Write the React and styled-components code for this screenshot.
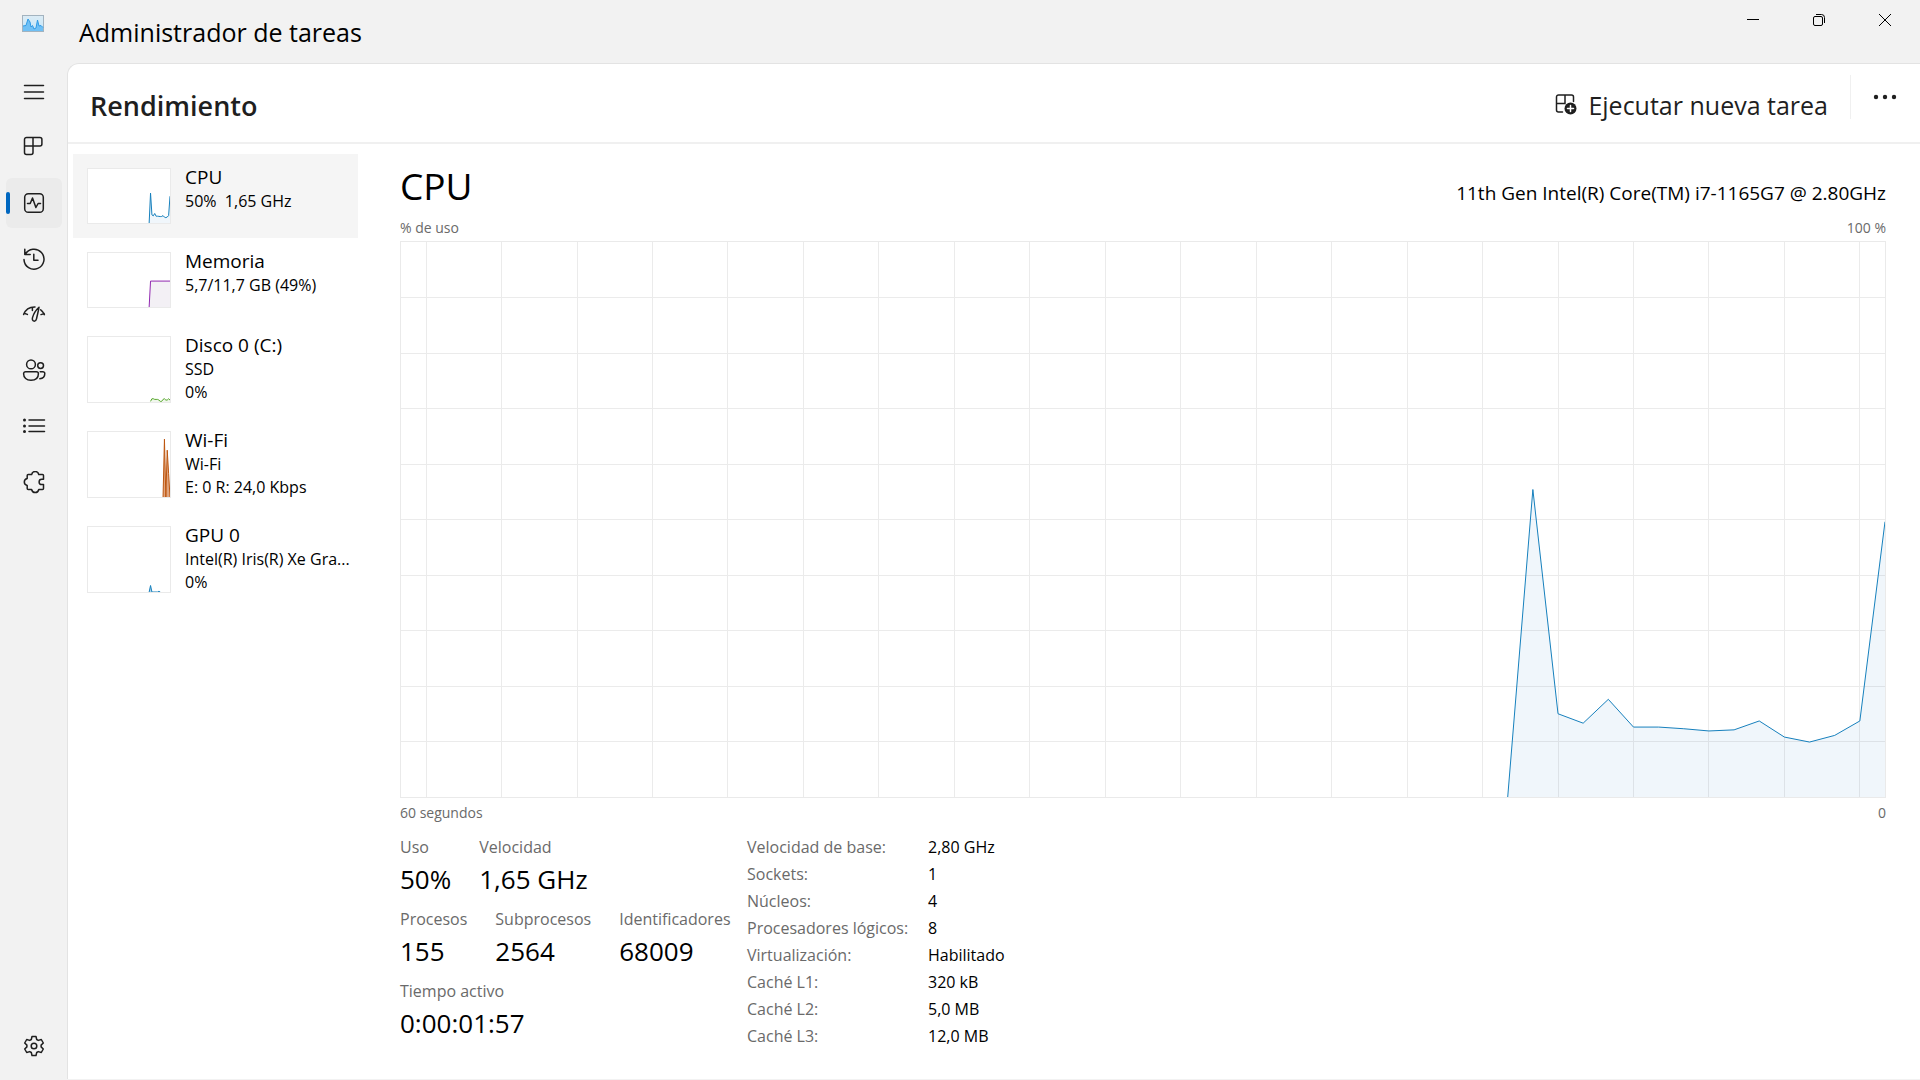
import React from 'react';
import styled, { createGlobalStyle } from 'styled-components';

const colors = {
  chrome: '#f2f2f2',
  panel: '#ffffff',
  edge: '#e3e3e3',
  divider: '#f0f0f0',
  grid: '#eaeaea',
  ink: '#000000',
  icon: '#1f1f1f',
  muted: '#6a6a6a',
  accent: '#0067c0'
};

const GlobalStyle = createGlobalStyle`
  *, *::before, *::after {
    box-sizing: border-box;
  }
  body {
    margin: 0;
    color: ${colors.ink};
    background: ${colors.chrome};
    font-family: 'Open Sans', 'Noto Sans', sans-serif;
  }
  button {
    padding: 0;
    border: 0;
    color: inherit;
    background: none;
    font: inherit;
  }
`;

const StyledWindow = styled.div`
  min-height: 100vh;
  display: flex;
  flex-direction: column;
`;

const StyledTitleBar = styled.header`
  height: 63px;
  display: flex;
  align-items: flex-start;
`;

const StyledLogo = styled.div`
  width: 79px;
  padding: 15px 0 0 22px;
  display: flex;
`;

const StyledTitle = styled.h1`
  flex: 1;
  margin: 0;
  font-size: 25px;
  font-weight: 400;
  line-height: 64px;
`;

const StyledControls = styled.div`
  display: flex;
  padding-right: 2px;
`;

const StyledControl = styled.button`
  width: 66px;
  height: 40px;
  display: flex;
  align-items: center;
  justify-content: center;
`;

const StyledBody = styled.div`
  flex: 1;
  display: flex;
  padding-bottom: 1px;
`;

const StyledSidebar = styled.nav`
  width: 67px;
  padding: 3px 5px 8px 6px;
  display: flex;
  flex-direction: column;
  gap: 6px;
`;

const StyledNavButton = styled.button`
  position: relative;
  width: 56px;
  height: 50px;
  display: flex;
  align-items: center;
  justify-content: center;
  border-radius: 6px;
  color: ${colors.icon};
  background: ${({ $active }) => ($active ? '#ebebeb' : 'transparent')};
  margin-top: ${({ $last }) => ($last ? 'auto' : '0')};

  &::before {
    content: '';
    display: ${({ $active }) => ($active ? 'block' : 'none')};
    position: absolute;
    left: 0;
    top: 14px;
    width: 4px;
    height: 22px;
    border-radius: 2px;
    background: ${colors.accent};
  }
`;

const StyledPanel = styled.main`
  flex: 1;
  min-width: 0;
  display: flex;
  flex-direction: column;
  border: solid ${colors.edge};
  border-width: 1px 0 0 1px;
  border-top-left-radius: 12px;
  background: ${colors.panel};
`;

const StyledPageHeader = styled.div`
  height: 80px;
  padding: 11px 23px 0 22px;
  display: flex;
  align-items: flex-start;
  border-bottom: 2px solid ${colors.divider};
`;

const StyledPageTitle = styled.h2`
  flex: 1;
  margin: 0;
  color: ${colors.icon};
  font-size: 27px;
  font-weight: 600;
  line-height: 62px;
`;

const StyledRunButton = styled.button`
  display: flex;
  align-items: center;
  gap: 10px;
  padding-right: 22px;
  color: ${colors.icon};
  font-size: 25px;
  line-height: 60px;
`;

const StyledMoreButton = styled.button`
  height: 44px;
  padding-left: 22px;
  display: flex;
  align-items: center;
  border-left: 1px solid ${colors.divider};
  color: ${colors.icon};
`;

const StyledContent = styled.div`
  flex: 1;
  display: flex;
  padding: 10px 34px 0 5px;
`;

const StyledResources = styled.div`
  width: 285px;
  flex: none;
`;

const StyledResource = styled.button`
  width: 100%;
  padding: 11px 0 11px 14px;
  display: flex;
  align-items: flex-start;
  gap: 14px;
  text-align: left;
  background: ${({ $active }) => ($active ? '#f5f5f5' : 'transparent')};
`;

const StyledThumb = styled.div`
  flex: none;
  width: 84px;
  height: ${({ $tall }) => ($tall ? '67px' : '56px')};
  margin: 3px 0;
  border: 1px solid ${colors.grid};
  background: ${colors.panel};
`;

const StyledResourceText = styled.div`
  font-size: 16px;
  line-height: 23px;
  white-space: pre;
`;

const StyledResourceName = styled.div`
  font-size: 19px;
  line-height: 25px;
`;

const StyledDetail = styled.section`
  flex: 1;
  min-width: 0;
  padding: 5px 0 29px 42px;
  display: flex;
  flex-direction: column;
`;

const StyledDetailHeader = styled.div`
  display: flex;
  align-items: baseline;
  justify-content: space-between;
`;

const StyledDetailTitle = styled.h3`
  margin: 0;
  font-size: 37px;
  font-weight: 400;
  line-height: 54px;
`;

const StyledDetailModel = styled.div`
  font-size: 19px;
`;

const StyledAxis = styled.div`
  display: flex;
  justify-content: space-between;
  color: ${colors.muted};
  font-size: 14px;
  line-height: 20px;
  padding: 5px 0 3px;
`;

/* size containment keeps the plot from pushing the box taller */
const StyledChartBox = styled.div`
  flex: 1;
  min-height: 240px;
  contain: size;
  border: 1px solid ${colors.grid};
`;

const StyledPlot = styled.svg`
  display: block;
  width: 100%;
  height: 100%;
`;

const StyledStats = styled.div`
  display: flex;
  padding-top: 8px;
`;

const StyledMetrics = styled.div`
  width: 347px;
  padding-top: 1px;
  display: flex;
  flex-direction: column;
  gap: 8px;
`;

const StyledMetricRow = styled.div`
  display: flex;
  gap: 28px;
`;

const StyledMetricLabel = styled.div`
  color: ${colors.muted};
  font-size: 16px;
  line-height: 24px;
`;

const StyledMetricValue = styled.div`
  font-size: 26px;
  line-height: 40px;
`;

const StyledSpecs = styled.table`
  border-collapse: collapse;
  font-size: 16px;
  line-height: 27px;

  th {
    width: 181px;
    padding: 0;
    color: ${colors.muted};
    font-weight: 400;
    text-align: left;
  }
  td {
    padding: 0;
  }
`;

const cpuHistory = [
  [44, 0], [45, 55.4], [46, 15], [47, 13.3], [48, 17.6], [49, 12.6],
  [50, 12.6], [51, 12.3], [52, 11.9], [53, 12.1], [54, 13.7], [55, 10.8],
  [56, 9.9], [57, 11.1], [58, 13.7], [59, 49.6]
];

const resources = [
  {
    name: 'CPU',
    lines: ['50%  1,65 GHz'],
    stroke: '#1680bd',
    fill: '#f0f6fb',
    history: cpuHistory
  },
  {
    name: 'Memoria',
    lines: ['5,7/11,7 GB (49%)'],
    stroke: '#9128b0',
    fill: '#f3f0f5',
    history: [[44, 0], [45, 48], [59, 48]]
  },
  {
    name: 'Disco 0 (C:)',
    lines: ['SSD', '0%'],
    stroke: '#55a62a',
    fill: '#f0f7ec',
    history: [
      [45, 1], [46, 5], [47, 5], [48, 4], [49, 4], [50, 4], [51, 3],
      [52, 1], [53, 1], [54, 4], [55, 5], [56, 3], [57, 3], [58, 5], [59, 3]
    ]
  },
  {
    name: 'Wi-Fi',
    lines: ['Wi-Fi', 'E: 0 R: 24,0 Kbps'],
    stroke: '#bd560f',
    fill: '#e0a37c',
    history: [[54, 0], [55, 89], [56, 0], [57, 72], [58, 36], [59, 0]]
  },
  {
    name: 'GPU 0',
    lines: ['Intel(R) Iris(R) Xe Gra...', '0%'],
    stroke: '#1680bd',
    fill: '#a9d0e8',
    history: [[44, 0], [45, 10], [46, 0], [50, 0], [51, 1], [52, 0]]
  }
];

const metricRows = [
  [['Uso', '50%'], ['Velocidad', '1,65 GHz']],
  [['Procesos', '155'], ['Subprocesos', '2564'], ['Identificadores', '68009']],
  [['Tiempo activo', '0:00:01:57']]
];

const specs = [
  ['Velocidad de base:', '2,80 GHz'],
  ['Sockets:', '1'],
  ['Núcleos:', '4'],
  ['Procesadores lógicos:', '8'],
  ['Virtualización:', 'Habilitado'],
  ['Caché L1:', '320 kB'],
  ['Caché L2:', '5,0 MB'],
  ['Caché L3:', '12,0 MB']
];

const Icon = ({ children }) => (
  <svg
    width="24"
    height="24"
    viewBox="0 0 24 24"
    fill="none"
    stroke="currentColor"
    strokeWidth="1.5"
    strokeLinecap="round"
    strokeLinejoin="round"
    aria-hidden="true"
  >
    {children}
  </svg>
);

const MenuIcon = () => (
  <Icon>
    <path d="M2.5 6.5h19M2.5 13h19M2.5 19.5h19" />
  </Icon>
);

const ProcessesIcon = () => (
  <Icon>
    <path d="M4.5 2.5h13.4a2 2 0 0 1 2 2v4.4a2 2 0 0 1-2 2H11v6.6a2 2 0 0 1-2 2H4.5a2 2 0 0 1-2-2v-13a2 2 0 0 1 2-2zM11 2.5v8.4M2.5 10.9H11" />
  </Icon>
);

const PerformanceIcon = () => (
  <Icon>
    <rect x="2.7" y="2.7" width="18.6" height="18.6" rx="3.6" />
    <path d="M5.5 12.5h2.7L10.5 7l3.4 9.5 2.2-4h2.4" />
  </Icon>
);

const HistoryIcon = () => (
  <Icon>
    <path d="M3.2 7.4A10 10 0 1 1 2 12.6M2.8 2.2v5.4h5.4M11.8 7.2v6h4.2" />
  </Icon>
);

const StartupIcon = () => (
  <Icon>
    <path d="M1.6 11.6C3.4 6.6 7.4 3.9 13 4M2 10.2l3.4 1.2M10.4 4.4v3M18.7 6.8c1.7 1.2 2.9 2.8 3.7 4.8M22.2 10.6l-3.2 1" />
    <path d="M17 4.2c-2.8 2.5-5.3 6-6.5 10.4-.5 2 .2 3.3 1.4 3.5 1.3.2 2.2-.6 2.6-2.3C15.3 11.9 16.5 8 17 4.2z" />
  </Icon>
);

const UsersIcon = () => (
  <Icon>
    <circle cx="9" cy="5.4" r="4.4" />
    <circle cx="18.6" cy="6.6" r="2.9" />
    <path d="M3.6 12.7h10.8a2 2 0 0 1 2 2c0 4.1-2.9 6.5-7.4 6.5s-7.4-2.4-7.4-6.5a2 2 0 0 1 2-2zM18.2 12.7h2.7a1.9 1.9 0 0 1 1.9 1.9c0 3-1.7 5-5 5.2" />
  </Icon>
);

const DetailsIcon = () => (
  <Icon>
    <path d="M7 5h15.5M7 11h15.5M7 16.5h15.5" />
    <g fill="currentColor" stroke="none">
      <circle cx="2.5" cy="5" r="1.5" />
      <circle cx="2.5" cy="11" r="1.5" />
      <circle cx="2.5" cy="16.5" r="1.5" />
    </g>
  </Icon>
);

const ServicesIcon = () => (
  <Icon>
    <path d="M9.6 3.6c.4-2 1.6-3.1 3.6-3.1s3.2 1.1 3.6 3.1h3.7a1 1 0 0 1 1 1v3.6h-1.7a2.7 2.7 0 0 0 0 5.4h1.700v3.9a1 1 0 0 1-1 1h-3.7c-.4 2-1.6 3.1-3.6 3.1s-3.2-1.1-3.6-3.1H6.2a1 1 0 0 1-1-1v-3.1c-1.9-.5-2.9-1.6-2.9-3.4s1-2.9 2.9-3.4V4.600a1 1 0 0 1 1-1z" />
  </Icon>
);

const SettingsIcon = () => (
  <Icon>
    <circle cx="12" cy="12" r="2.8" />
    <path d="M10 2.5h4l.7 3 1.6.9 3-.9 2 3.5-2.2 2.1v1.8l2.2 2.1-2 3.5-3-.9-1.6.9-.7 3h-4l-.7-3-1.600-.9-3 .9-2-3.500 2.200-2.100v-1.800L2.700 9l2-3.500 3 .9 1.600-.9z" />
  </Icon>
);

const RunTaskIcon = () => (
  <Icon>
    <path d="M8.5 19H4.5a2 2 0 0 1-2-2V4a2 2 0 0 1 2-2h13a2 2 0 0 1 2 2v4.5M11 2v8.5M2.5 10.5H11" />
    <circle cx="16.5" cy="15.5" r="6" fill="currentColor" stroke="none" />
    <path d="M16.5 12.5v6M13.5 15.5h6" stroke="#fff" />
  </Icon>
);

const MoreIcon = () => (
  <Icon>
    <g fill="currentColor" stroke="none">
      <circle cx="3" cy="12" r="2.2" />
      <circle cx="12" cy="12" r="2.2" />
      <circle cx="21" cy="12" r="2.2" />
    </g>
  </Icon>
);

const AppLogo = () => (
  <svg width="22" height="17" viewBox="0 0 22 17" aria-hidden="true">
    <defs>
      <linearGradient id="logo-sky" x1="0" y1="0" x2="0" y2="1">
        <stop offset="0" stopColor="#dcecf5" />
        <stop offset="1" stopColor="#c3e6fa" />
      </linearGradient>
    </defs>
    <rect x=".5" y=".5" width="21" height="16" fill="url(#logo-sky)" stroke="#a3b3bf" />
    <path d="M1 16v-5l3-.5L6 4l2 3 1 5 1.5-1.5L12 14l2-1 1.5-8 1.5 6 2-.5 2 2V16z" fill="#6fc0f5" />
    <path d="M1 11l3-.5L6 4l2 3 1 5 1.5-1.5L12 14l2-1 1.5-8 1.5 6 2-.5 2 2" fill="none" stroke="#2f9be6" />
  </svg>
);

const navItems = [
  { label: 'Abrir navegación', icon: MenuIcon },
  { label: 'Procesos', icon: ProcessesIcon },
  { label: 'Rendimiento', icon: PerformanceIcon, active: true },
  { label: 'Historial de aplicaciones', icon: HistoryIcon },
  { label: 'Aplicaciones de arranque', icon: StartupIcon },
  { label: 'Usuarios', icon: UsersIcon },
  { label: 'Detalles', icon: DetailsIcon },
  { label: 'Servicios', icon: ServicesIcon },
  { label: 'Configuración', icon: SettingsIcon, last: true }
];

// x runs over the 60 samples of the last minute, y over 0-100 %
const Plot = ({ history, stroke, fill, grid }) => {
  const points = history.map(([x, value]) => `${x},${100 - value}`);
  const first = history[0][0];
  const last = history[history.length - 1][0];
  const columns = Array.from({ length: 20 }, (_, i) => 1 + i * 3);
  const rows = Array.from({ length: 9 }, (_, i) => 10 + i * 10);
  return (
    <StyledPlot viewBox="0 0 59 100" preserveAspectRatio="none" aria-hidden="true">
      <polygon points={`${first},100 ${points.join(' ')} ${last},100`} fill={fill} />
      {grid && (
        <path
          d={
            columns.map(x => `M${x} 0V100`).join('') +
            rows.map(y => `M0 ${y}H59`).join('')
          }
          stroke="#000"
          strokeOpacity="0.08"
          vectorEffect="non-scaling-stroke"
          shapeRendering="crispEdges"
        />
      )}
      <polyline
        points={points.join(' ')}
        fill="none"
        stroke={stroke}
        vectorEffect="non-scaling-stroke"
      />
    </StyledPlot>
  );
};

const Resource = ({ name, lines, active, ...plot }) => (
  <StyledResource type="button" $active={active}>
    <StyledThumb $tall={lines.length > 1}>
      <Plot {...plot} />
    </StyledThumb>
    <StyledResourceText>
      <StyledResourceName>{name}</StyledResourceName>
      {lines.map(line => (
        <div key={line}>{line}</div>
      ))}
    </StyledResourceText>
  </StyledResource>
);

const App = () => (
  <StyledWindow>
    <GlobalStyle />
    <StyledTitleBar>
      <StyledLogo>
        <AppLogo />
      </StyledLogo>
      <StyledTitle>Administrador de tareas</StyledTitle>
      <StyledControls>
        <StyledControl type="button" aria-label="Minimizar">
          <svg width="12" height="12" viewBox="0 0 12 12" stroke="#000">
            <path d="M0 5.5h12" />
          </svg>
        </StyledControl>
        <StyledControl type="button" aria-label="Restaurar">
          <svg width="12" height="12" viewBox="0 0 12 12" fill="none" stroke="#000">
            <rect x=".5" y="2.5" width="9" height="9" rx="1.5" />
            <path d="M3 .5h5.5a3 3 0 0 1 3 3V9" />
          </svg>
        </StyledControl>
        <StyledControl type="button" aria-label="Cerrar">
          <svg width="12" height="12" viewBox="0 0 12 12" stroke="#000">
            <path d="M0 0l12 12M12 0L0 12" />
          </svg>
        </StyledControl>
      </StyledControls>
    </StyledTitleBar>
    <StyledBody>
      <StyledSidebar>
        {navItems.map(({ label, icon: NavIcon, active, last }) => (
          <StyledNavButton
            key={label}
            type="button"
            aria-label={label}
            $active={active}
            $last={last}
          >
            <NavIcon />
          </StyledNavButton>
        ))}
      </StyledSidebar>
      <StyledPanel>
        <StyledPageHeader>
          <StyledPageTitle>Rendimiento</StyledPageTitle>
          <StyledRunButton type="button">
            <RunTaskIcon />
            Ejecutar nueva tarea
          </StyledRunButton>
          <StyledMoreButton type="button" aria-label="Más opciones">
            <MoreIcon />
          </StyledMoreButton>
        </StyledPageHeader>
        <StyledContent>
          <StyledResources>
            {resources.map((resource, i) => (
              <Resource key={resource.name} active={i === 0} {...resource} />
            ))}
          </StyledResources>
          <StyledDetail>
            <StyledDetailHeader>
              <StyledDetailTitle>CPU</StyledDetailTitle>
              <StyledDetailModel>
                11th Gen Intel(R) Core(TM) i7-1165G7 @ 2.80GHz
              </StyledDetailModel>
            </StyledDetailHeader>
            <StyledAxis>
              <span>% de uso</span>
              <span>100 %</span>
            </StyledAxis>
            <StyledChartBox>
              <Plot history={cpuHistory} stroke="#1680bd" fill="#f0f6fb" grid />
            </StyledChartBox>
            <StyledAxis>
              <span>60 segundos</span>
              <span>0</span>
            </StyledAxis>
            <StyledStats>
              <StyledMetrics>
                {metricRows.map(row => (
                  <StyledMetricRow key={row[0][0]}>
                    {row.map(([label, value]) => (
                      <div key={label}>
                        <StyledMetricLabel>{label}</StyledMetricLabel>
                        <StyledMetricValue>{value}</StyledMetricValue>
                      </div>
                    ))}
                  </StyledMetricRow>
                ))}
              </StyledMetrics>
              <StyledSpecs>
                <tbody>
                  {specs.map(([label, value]) => (
                    <tr key={label}>
                      <th scope="row">{label}</th>
                      <td>{value}</td>
                    </tr>
                  ))}
                </tbody>
              </StyledSpecs>
            </StyledStats>
          </StyledDetail>
        </StyledContent>
      </StyledPanel>
    </StyledBody>
  </StyledWindow>
);

export default App;
